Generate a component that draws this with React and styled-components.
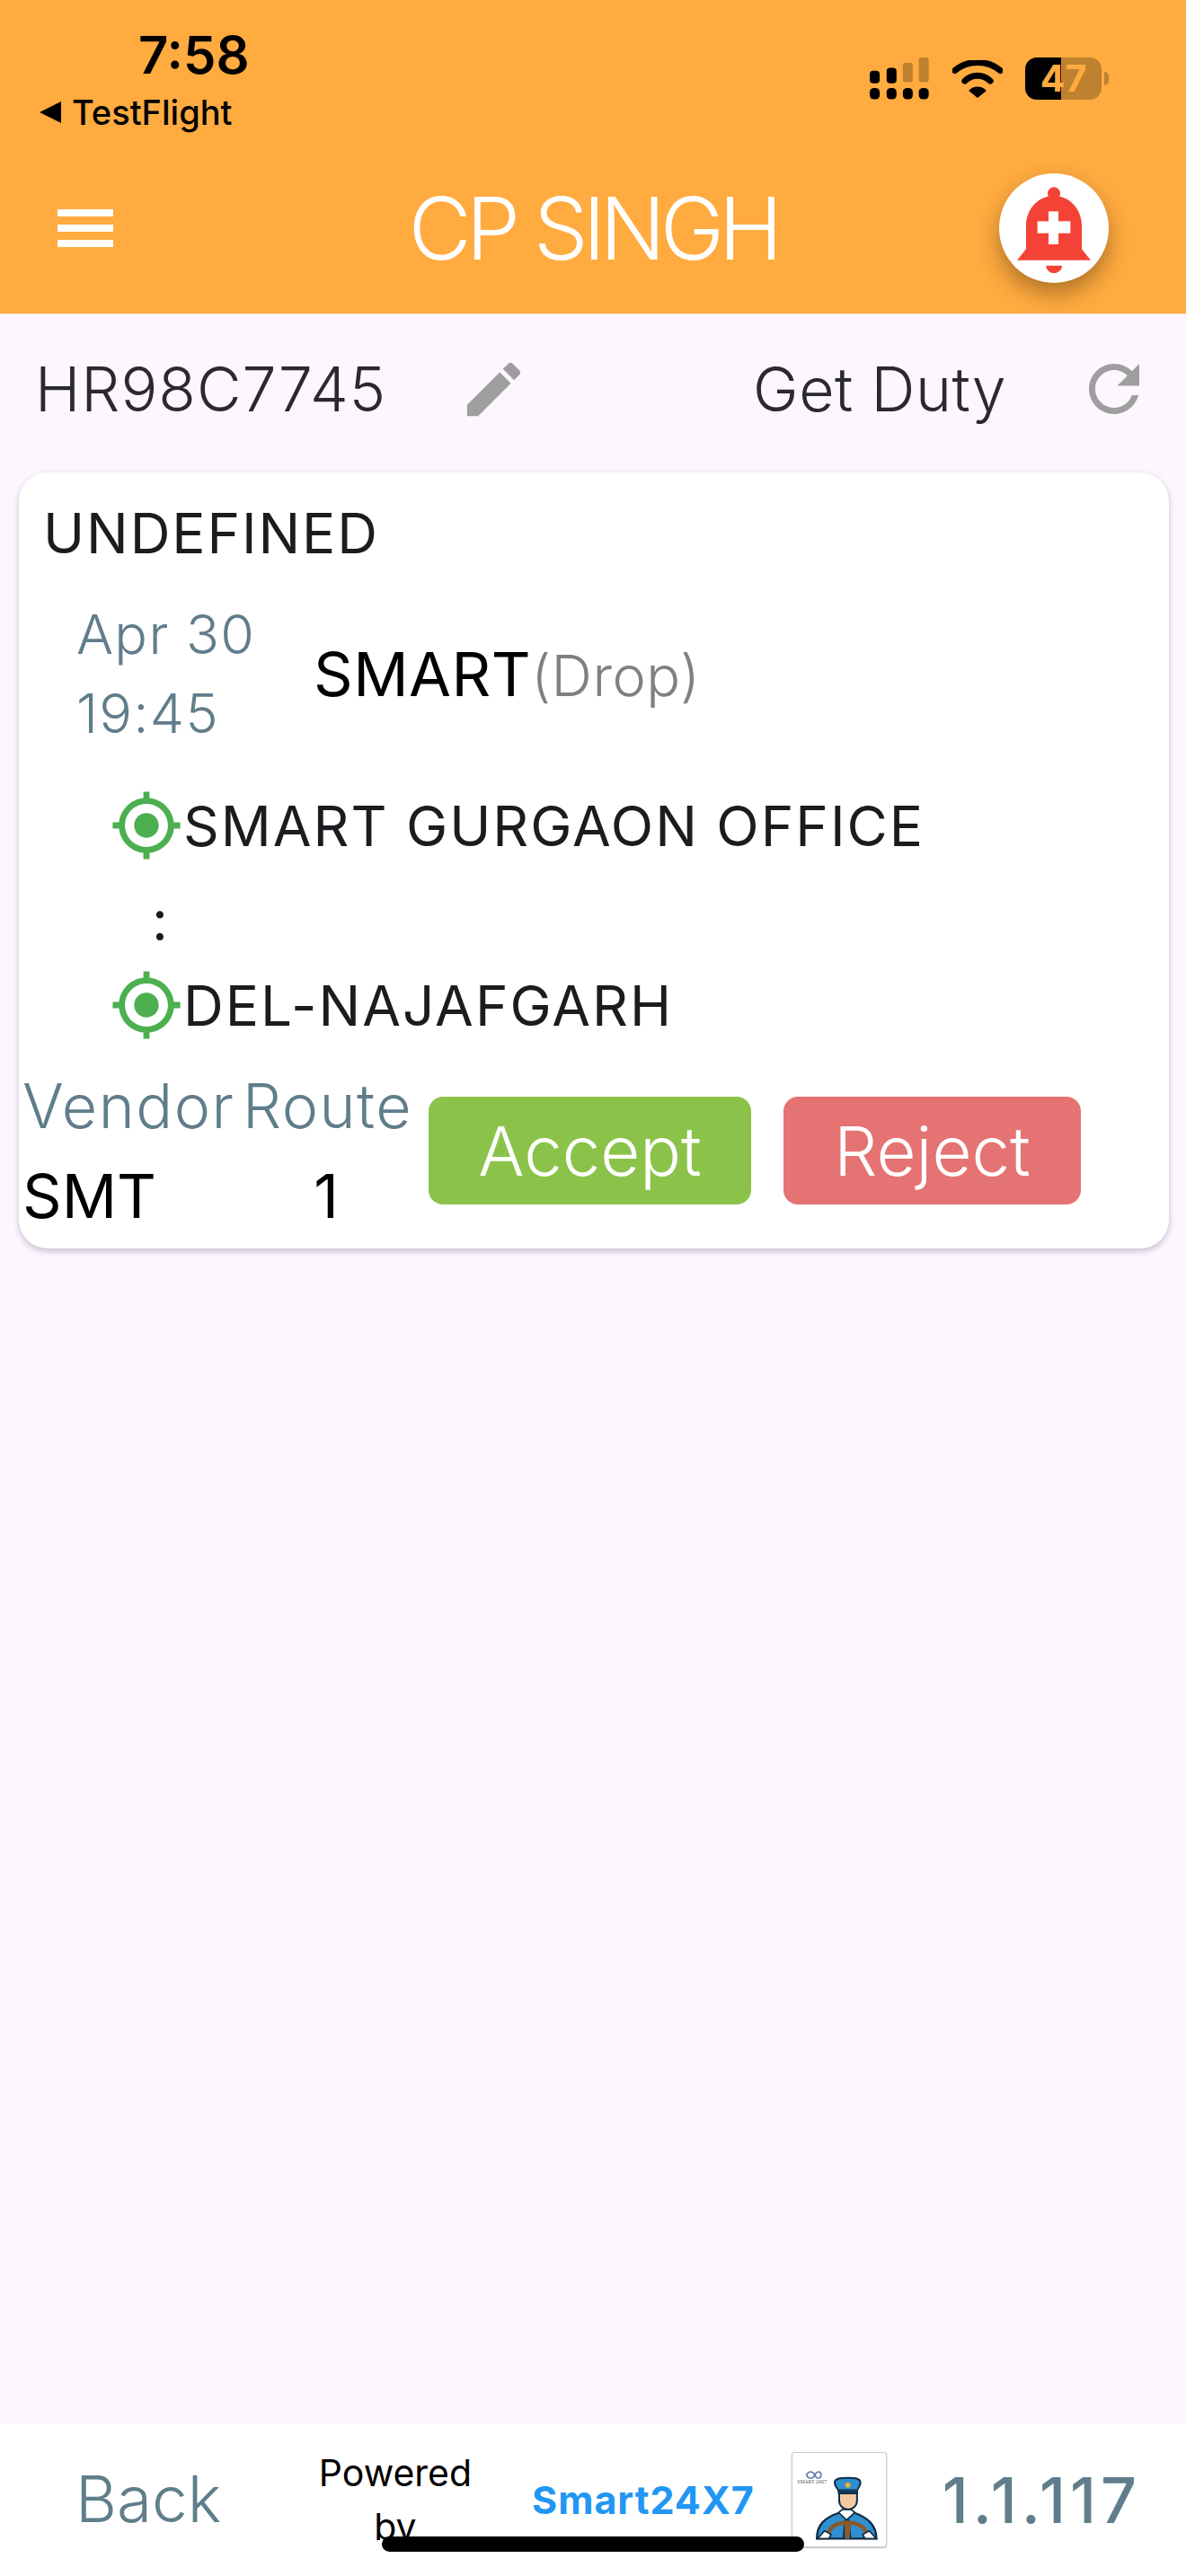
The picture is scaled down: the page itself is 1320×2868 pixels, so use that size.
import React from "react";
import styled, { createGlobalStyle } from "styled-components";

const Global = createGlobalStyle`
  html, body { margin: 0; padding: 0; background: #fdf6ff; }
  * { box-sizing: border-box; }
  #root { font-family: Inter, "Liberation Sans", sans-serif; }
`;

const Page = styled.div`
  position: relative;
  width: 1320px;
  height: 2868px;
  display: flex;
  flex-direction: column;
  overflow: hidden;
  background: #fdf6ff;
`;

const Header = styled.header`
  height: 350px;
  flex: none;
  background: #ffab40;
  display: flex;
  flex-direction: column;
  border-bottom: 1px solid #f0e4e8;
`;

const StatusBar = styled.div`
  height: 186px;
  padding: 34px 94px 0 42px;
  display: flex;
  justify-content: space-between;
  align-items: flex-start;
`;

const StatusLeft = styled.div`
  display: flex;
  flex-direction: column;
`;

const Time = styled.div`
  margin-left: 112px;
  font-size: 58px;
  line-height: 54px;
  font-weight: 600;
  color: #000;
`;

const BackApp = styled.div`
  margin-top: 14px;
  display: flex;
  align-items: center;
  gap: 12px;
  font-size: 38px;
  line-height: 46px;
  font-weight: 500;
  color: #000;
`;

const StatusIcons = styled.div`
  margin-top: 30px;
  display: flex;
  align-items: center;
  gap: 25px;
`;

const Battery = styled.div`
  position: relative;
  width: 85px;
  height: 47px;
  border-radius: 13px;
  background: linear-gradient(90deg, #000 0 47%, #bd812f 47% 100%);
  display: flex;
  align-items: center;
  justify-content: center;
  color: #ffab40;
  font-size: 41px;
  font-weight: 700;
  line-height: 47px;
  &::after {
    content: "";
    position: absolute;
    right: -8px;
    top: 16px;
    width: 5px;
    height: 15px;
    border-radius: 0 6px 6px 0;
    background: #bd812f;
  }
`;

const AppBar = styled.div`
  flex: 1;
  padding: 0 86px 27px 86px;
  display: grid;
  grid-template-columns: 1fr auto 1fr;
  align-items: center;
`;

const Title = styled.h1`
  margin: 0;
  font-size: 96px;
  line-height: 100px;
  font-weight: 300;
  letter-spacing: -6px;
  color: #fff;
`;

const Burger = styled.div`
  margin-left: -22px;
  width: 62px;
  height: 42px;
  display: flex;
  flex-direction: column;
  justify-content: space-between;
  span {
    display: block;
    height: 8px;
    background: #fff;
  }
`;

const AlarmButton = styled.div`
  justify-self: end;
  width: 122px;
  height: 122px;
  border-radius: 50%;
  background: #fff;
  display: flex;
  align-items: center;
  justify-content: center;
  box-shadow: 0 12px 24px rgba(70, 40, 0, 0.42);
  padding-top: 4px;
`;

const VehicleRow = styled.div`
  height: 176px;
  flex: none;
  padding: 0 38px 10px 39px;
  display: flex;
  align-items: center;
  color: #2b2930;
  font-size: 68px;
  letter-spacing: 1px;
  font-weight: 300;
`;

const EditIcon = styled.svg`
  margin-left: 80px;
  fill: #9e9e9e;
`;

const GetDuty = styled.span`
  margin-left: auto;
  letter-spacing: 0.5px;
`;

const RefreshIcon = styled.svg`
  margin-left: 78px;
  fill: #9e9e9e;
`;

const Card = styled.section`
  margin: 0 19px 0 21px;
  height: 864px;
  flex: none;
  padding-top: 36px;
  border-radius: 32px;
  background: #fff;
  box-shadow: 0 3px 7px rgba(60, 40, 80, 0.28);
`;

const CardTitle = styled.div`
  padding-left: 27px;
  font-size: 62px;
  line-height: 64px;
  font-weight: 400;
  letter-spacing: 1.9px;
  color: #1c1b1f;
`;

const TripRow = styled.div`
  margin-top: 36px;
  padding-left: 64px;
  display: flex;
  align-items: center;
`;

const DateBlock = styled.div`
  width: 264px;
  font-size: 61px;
  line-height: 88px;
  font-weight: 300;
  letter-spacing: 1.3px;
  color: #607d8b;
`;

const TripName = styled.div`
  font-size: 68px;
  letter-spacing: 0.5px;
  font-weight: 400;
  color: #000;
`;

const TripType = styled.span`
  font-size: 63px;
  font-weight: 300;
  color: #808080;
`;

const Stop = styled.div`
  padding-left: 101px;
  display: flex;
  align-items: center;
  height: 82px;
  font-size: 62px;
  letter-spacing: 2px;
  font-weight: 400;
  color: #1c1b1f;
  margin-top: ${(p) => p.$top || 0}px;
`;

const StopIcon = styled.svg`
  fill: #4caf50;
  flex: none;
`;

const Dots = styled.div`
  height: 118px;
  padding: 30px 0 0 148px;
  font-size: 62px;
  line-height: 70px;
  color: #1c1b1f;
`;

const BottomRow = styled.div`
  margin-top: 21px;
  display: flex;
  align-items: center;
  padding-left: 4px;
`;

const InfoCol = styled.div`
  width: ${(p) => p.$w}px;
  flex: none;
  text-align: ${(p) => p.$align || "left"};
`;

const InfoLabel = styled.div`
  font-size: 68px;
  line-height: 100px;
  letter-spacing: 1.5px;
  font-weight: 300;
  color: #607d8b;
  white-space: nowrap;
`;

const InfoValue = styled.div`
  font-size: 68px;
  line-height: 100px;
  font-weight: 400;
  color: #000;
`;

const ActionButton = styled.div`
  width: ${(p) => p.$w}px;
  height: 120px;
  margin-left: ${(p) => p.$left}px;
  flex: none;
  border-radius: 16px;
  background: ${(p) => p.$bg};
  color: #fff;
  font-size: 76px;
  font-weight: 300;
  display: flex;
  align-items: center;
  justify-content: center;
`;

const Spacer = styled.div`
  flex: 1;
`;

const Footer = styled.footer`
  height: 170px;
  flex: none;
  background: #fff;
  display: flex;
  align-items: center;
  padding: 0 50px 0 84px;
`;

const BackLabel = styled.div`
  width: 270px;
  font-size: 71px;
  line-height: 84px;
  font-weight: 300;
  color: #607d8b;
  margin-bottom: 2px;
`;

const Powered = styled.div`
  width: 172px;
  flex: none;
  text-align: center;
  font-size: 41px;
  line-height: 60px;
  color: #000;
`;

const Brand = styled.div`
  margin-left: 66px;
  width: 289px;
  font-size: 43px;
  font-weight: 700;
  letter-spacing: 1px;
  color: #2196f3;
`;

const LogoBox = styled.div`
  width: 106px;
  height: 106px;
  border: 1px solid #c9c9c9;
  border-radius: 3px;
  box-shadow: 0 1px 2px rgba(0, 0, 0, 0.25);
  background: #fff;
`;

const Version = styled.div`
  margin-left: auto;
  font-size: 70px;
  letter-spacing: 5px;
  font-weight: 500;
  color: #607d8b;
`;

const HomeIndicator = styled.div`
  position: absolute;
  left: 425px;
  top: 2824px;
  width: 470px;
  height: 17px;
  border-radius: 9px;
  background: #000;
`;

const Gps = () => (
  <StopIcon width="82" height="82" viewBox="0 0 24 24">
    <path d="M12 8c-2.21 0-4 1.79-4 4s1.79 4 4 4 4-1.79 4-4-1.79-4-4-4zm8.94 3c-.46-4.17-3.77-7.48-7.94-7.94V1h-2v2.06C6.83 3.52 3.52 6.83 3.06 11H1v2h2.06c.46 4.17 3.77 7.48 7.94 7.94V23h2v-2.06c4.17-.46 7.48-3.77 7.94-7.94H23v-2h-2.06zM12 19c-3.87 0-7-3.13-7-7s3.13-7 7-7 7 3.13 7 7-3.13 7-7 7z" />
  </StopIcon>
);

const Signal = () => (
  <svg width="67" height="47" viewBox="0 0 200 140">
    <g fill="#000">
      <rect x="0" y="44" width="33" height="42" rx="12" />
      <rect x="56" y="34" width="33" height="52" rx="12" />
      <rect x="0" y="101" width="33" height="38" rx="14" />
      <rect x="56" y="101" width="33" height="38" rx="14" />
      <rect x="110" y="101" width="33" height="38" rx="14" />
      <rect x="163" y="101" width="33" height="38" rx="14" />
    </g>
    <g fill="#bd812f">
      <rect x="110" y="18" width="33" height="64" rx="8" />
      <rect x="163" y="0" width="33" height="82" rx="8" />
    </g>
  </svg>
);

const Wifi = () => (
  <svg width="56" height="42" viewBox="0 0 170 127">
    <path d="M8 35 C52 -2 118 -2 162 35" fill="none" stroke="#000" strokeWidth="21" strokeLinecap="round" />
    <path d="M42 70 C66 46 104 46 128 70" fill="none" stroke="#000" strokeWidth="21" strokeLinecap="round" />
    <path d="M55 103 C70 85 100 85 115 103 L85 127 Z" fill="#000" />
  </svg>
);

const Bell = () => (
  <svg width="82" height="96" viewBox="0 0 246 288">
    <circle cx="123" cy="22" r="21" fill="#f44336" />
    <path d="M0 245 L30 208 V130 C30 75 70 30 123 30 C176 30 216 75 216 130 V208 L246 245 Z" fill="#f44336" />
    <path d="M97 263 H150 C150 278 137 288 123 288 C110 288 97 278 97 263 Z" fill="#f44336" />
    <rect x="68" y="115" width="110" height="40" fill="#fff" />
    <rect x="105" y="82" width="33" height="110" fill="#fff" />
  </svg>
);

const Driver = () => (
  <svg width="104" height="104" viewBox="0 0 314 314">
    <path d="M47 74 C54 60 68 60 75 74 C82 88 96 88 96 74 C96 60 82 60 75 74 C68 88 54 88 47 74 Z" fill="none" stroke="#5f7fb5" strokeWidth="5" />
    <text x="16" y="104" fontFamily="Liberation Serif, serif" fontSize="17" fill="#555">SMART 24X7</text>
    <path d="M82 288 C82 240 110 216 160 200 L205 200 C250 216 282 240 282 288 Z" fill="#2f8fd0" stroke="#0f2c44" strokeWidth="7" />
    <path d="M155 200 L182 225 L210 200 L196 190 H168 Z" fill="#fff" stroke="#0f2c44" strokeWidth="5" />
    <path d="M176 226 H190 L196 288 H170 Z" fill="#16517f" stroke="#0f2c44" strokeWidth="4" />
    <path d="M157 128 H217 V160 C217 178 202 190 187 190 C172 190 157 178 157 160 Z" fill="#f3c9a2" stroke="#0f2c44" strokeWidth="6" />
    <path d="M142 102 C140 86 160 84 186 84 C212 84 230 86 228 102 C226 118 214 120 216 136 H156 C158 120 144 118 142 102 Z" fill="#2f8fd0" stroke="#0f2c44" strokeWidth="6" />
    <rect x="154" y="122" width="64" height="12" fill="#123c5c" />
    <circle cx="186" cy="108" r="9" fill="#e8b23a" />
    <path d="M122 270 C130 222 238 222 248 270" fill="none" stroke="#8a5a2b" strokeWidth="13" />
    <path d="M174 240 H196 L192 288 H178 Z" fill="#8a5a2b" />
    <path d="M84 288 L108 262 L130 274 L122 288 Z" fill="#fff" stroke="#0f2c44" strokeWidth="5" />
    <path d="M282 288 L258 262 L236 274 L244 288 Z" fill="#fff" stroke="#0f2c44" strokeWidth="5" />
  </svg>
);

export default function App() {
  return (
    <Page>
      <Global />
      <Header>
        <StatusBar>
          <StatusLeft>
            <Time>7:58</Time>
            <BackApp>
              <svg width="26" height="24" viewBox="0 0 26 24"><path d="M26 0 V24 L2 12 Z" fill="#000" /></svg>
              TestFlight
            </BackApp>
          </StatusLeft>
          <StatusIcons>
            <Signal />
            <Wifi />
            <Battery>47</Battery>
          </StatusIcons>
        </StatusBar>
        <AppBar>
          <Burger><span /><span /><span /></Burger>
          <Title>CP SINGH</Title>
          <AlarmButton><Bell /></AlarmButton>
        </AppBar>
      </Header>
      <VehicleRow>
        <span>HR98C7745</span>
        <EditIcon width="79" height="79" viewBox="0 0 24 24">
          <path d="M3 17.25V21h3.75L17.81 9.94l-3.75-3.75L3 17.25zM20.71 7.04c.39-.39.39-1.02 0-1.41l-2.34-2.34c-.39-.39-1.02-.39-1.41 0l-1.83 1.83 3.75 3.75 1.83-1.83z" />
        </EditIcon>
        <GetDuty>Get Duty</GetDuty>
        <RefreshIcon width="84" height="84" viewBox="0 0 24 24">
          <path d="M17.65 6.35C16.2 4.9 14.21 4 12 4c-4.42 0-7.99 3.58-7.99 8s3.57 8 7.99 8c3.73 0 6.84-2.55 7.73-6h-2.08c-.82 2.33-3.04 4-5.65 4-3.31 0-6-2.69-6-6s2.69-6 6-6c1.66 0 3.14.69 4.22 1.78L13 11h7V4l-2.35 2.35z" />
        </RefreshIcon>
      </VehicleRow>
      <Card>
        <CardTitle>UNDEFINED</CardTitle>
        <TripRow>
          <DateBlock>Apr 30<br />19:45</DateBlock>
          <TripName>SMART<TripType>(Drop)</TripType></TripName>
        </TripRow>
        <Stop $top={40}><Gps />SMART GURGAON OFFICE</Stop>
        <Dots>:</Dots>
        <Stop><Gps />DEL-NAJAFGARH</Stop>
        <BottomRow>
          <InfoCol $w={245}>
            <InfoLabel>Vendor</InfoLabel>
            <InfoValue>SMT</InfoValue>
          </InfoCol>
          <InfoCol $w={186} $align="center">
            <InfoLabel>Route</InfoLabel>
            <InfoValue>1</InfoValue>
          </InfoCol>
          <ActionButton $w={359} $left={21} $bg="#8bc34a">Accept</ActionButton>
          <ActionButton $w={331} $left={36} $bg="#e57373">Reject</ActionButton>
        </BottomRow>
      </Card>
      <Spacer />
      <Footer>
        <BackLabel>Back</BackLabel>
        <Powered>Powered by</Powered>
        <Brand>Smart24X7</Brand>
        <LogoBox><Driver /></LogoBox>
        <Version>1.1.117</Version>
      </Footer>
      <HomeIndicator />
    </Page>
  );
}
